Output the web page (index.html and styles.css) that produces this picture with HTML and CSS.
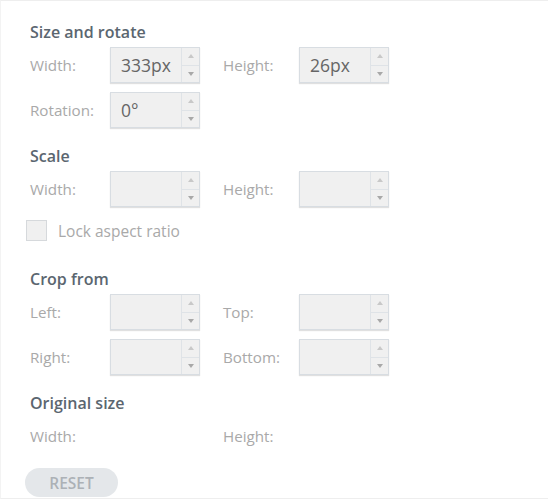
FILE: index.html
```html
<!DOCTYPE html>
<html>
<head>
<meta charset="utf-8">
<link rel="stylesheet" href="styles.css">
</head>
<body>
<div class="panel">
  <section class="group">
    <h2 class="heading">Size and rotate</h2>
    <div class="grid">
      <span class="label">Width:</span>
      <div class="field"><span class="value">333px</span><span class="spin"><i class="up"></i><i class="down"></i></span></div>
      <span class="label">Height:</span>
      <div class="field"><span class="value">26px</span><span class="spin"><i class="up"></i><i class="down"></i></span></div>
      <span class="label">Rotation:</span>
      <div class="field"><span class="value">0°</span><span class="spin"><i class="up"></i><i class="down"></i></span></div>
    </div>
  </section>

  <section class="group">
    <h2 class="heading">Scale</h2>
    <div class="grid">
      <span class="label">Width:</span>
      <div class="field"><span class="value"></span><span class="spin"><i class="up"></i><i class="down"></i></span></div>
      <span class="label">Height:</span>
      <div class="field"><span class="value"></span><span class="spin"><i class="up"></i><i class="down"></i></span></div>
    </div>
    <label class="check"><span class="box"></span><span class="check-text">Lock aspect ratio</span></label>
  </section>

  <section class="group crop">
    <h2 class="heading">Crop from</h2>
    <div class="grid">
      <span class="label">Left:</span>
      <div class="field"><span class="value"></span><span class="spin"><i class="up"></i><i class="down"></i></span></div>
      <span class="label">Top:</span>
      <div class="field"><span class="value"></span><span class="spin"><i class="up"></i><i class="down"></i></span></div>
      <span class="label">Right:</span>
      <div class="field"><span class="value"></span><span class="spin"><i class="up"></i><i class="down"></i></span></div>
      <span class="label">Bottom:</span>
      <div class="field"><span class="value"></span><span class="spin"><i class="up"></i><i class="down"></i></span></div>
    </div>
  </section>

  <section class="group">
    <h2 class="heading">Original size</h2>
    <div class="grid">
      <span class="label row-plain">Width:</span>
      <span class="label row-plain"></span>
      <span class="label row-plain">Height:</span>
      <span class="label row-plain"></span>
    </div>
  </section>

  <button class="reset">RESET</button>
</div>
</body>
</html>
```
FILE: styles.css
```css
html, body {
  margin: 0;
  padding: 0;
  background: #ffffff;
}
body {
  width: 548px;
  height: 499px;
  box-sizing: border-box;
  border-top: 1px solid #eeeeee;
  border-bottom: 1px solid #eeeeee;
  border-left: 1px solid #f3f3f3;
  overflow: hidden;
  font-family: "Open Sans", "Noto Sans", sans-serif;
}
.panel {
  padding: 21px 0 0 29px;
  display: flex;
  flex-direction: column;
}
.group {
  display: flex;
  flex-direction: column;
}
.heading {
  margin: 0;
  height: 20px;
  line-height: 20px;
  font-size: 16px;
  font-weight: 600;
  color: #5b6670;
  margin-bottom: 5px;
}
.group + .group {
  margin-top: 18px;
}
.group.crop {
  margin-top: 28px;
}
.grid {
  display: grid;
  grid-template-columns: 80px 113px 76px 90px;
  row-gap: 9px;
  align-items: center;
}
.label {
  font-size: 15.2px;
  color: #a9a9a9;
  line-height: 20px;
}
.row-plain {
  height: 36px;
  line-height: 36px;
}
.field {
  width: 90px;
  height: 36px;
  box-sizing: border-box;
  border: 1px solid #d8dde2;
  background: #f0f0f0;
  box-shadow: 0 1px 1px rgba(0, 0, 0, 0.12);
  display: flex;
}
.value {
  flex: 1;
  padding-left: 10px;
  font-size: 17.5px;
  line-height: 34px;
  color: #666666;
}
.spin {
  width: 17px;
  border-left: 1px solid #dfe3e7;
  display: flex;
  flex-direction: column;
}
.spin i {
  flex: 1;
  display: flex;
  align-items: center;
  justify-content: center;
}
.spin i::after {
  content: "";
  width: 0;
  height: 0;
  border-left: 3px solid transparent;
  border-right: 3px solid transparent;
}
.spin .up {
  border-bottom: 1px solid #dfe3e7;
}
.spin .up::after {
  border-bottom: 4px solid #c8c8c8;
}
.spin .down::after {
  border-top: 4px solid #a8a8a8;
}
.check {
  margin-top: 13px;
  margin-left: -4px;
  display: flex;
  align-items: center;
  gap: 11px;
  height: 21px;
}
.box {
  width: 21px;
  height: 21px;
  box-sizing: border-box;
  border: 1px solid #d6d9dc;
  background: #f0f0f0;
}
.check-text {
  font-size: 15.5px;
  color: #a9a9a9;
}
.reset {
  margin-top: 14px;
  margin-left: -5px;
  width: 93px;
  height: 29px;
  border: none;
  border-radius: 15px;
  background: #e4e7ea;
  color: #acb1b6;
  font-family: "Open Sans", "Noto Sans", sans-serif;
  font-size: 15.5px;
  font-weight: 600;
  padding: 0;
}
```
